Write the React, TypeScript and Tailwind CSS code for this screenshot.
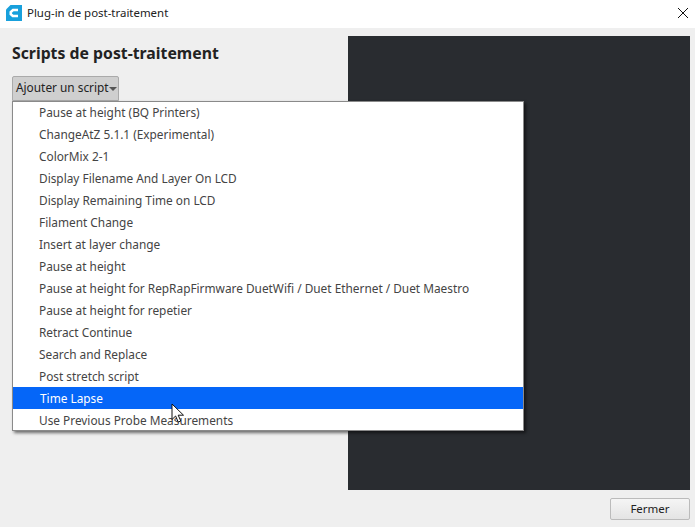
const items = [
  "Pause at height (BQ Printers)",
  "ChangeAtZ 5.1.1 (Experimental)",
  "ColorMix 2-1",
  "Display Filename And Layer On LCD",
  "Display Remaining Time on LCD",
  "Filament Change",
  "Insert at layer change",
  "Pause at height",
  "Pause at height for RepRapFirmware DuetWifi / Duet Ethernet / Duet Maestro",
  "Pause at height for repetier",
  "Retract Continue",
  "Search and Replace",
  "Post stretch script",
  "Time Lapse",
  "Use Previous Probe Measurements",
];

function Logo() {
  return (
    <svg width="16" height="16" viewBox="0 0 16 16" className="ml-[6px] shrink-0">
      <path d="M4.5 0H16V16H0V4.5Z" fill="#18a0dc" />
      <path d="M12 5H7L4.8 7V9.2L6.8 11H12" fill="none" stroke="#fff" strokeWidth="2.6" />
    </svg>
  );
}

export default function App() {
  return (
    <div className="relative flex h-[527px] w-[695px] flex-col overflow-hidden bg-[#efefef] font-['Noto_Sans',sans-serif] text-[#333]">
      <header className="flex h-[28px] shrink-0 items-center bg-white pb-[3px]">
        <Logo />
        <span className="ml-[5px] text-[11.45px] leading-none text-[#222]">Plug-in de post-traitement</span>
        <svg width="12" height="12" viewBox="0 0 12 12" className="ml-auto mr-[6px]">
          <path d="M1 1L11 11M11 1L1 11" stroke="#111" strokeWidth="1" />
        </svg>
      </header>
      <main className="flex min-h-0 flex-1 gap-[12px] pl-[12px] pr-[5px] pt-[8px]">
        <section className="w-[324px] shrink-0">
          <h1 className="mt-[7px] text-[15.8px] font-bold leading-[20px] text-[#222]">Scripts de post-traitement</h1>
          <button className="mt-[13px] flex h-[25px] w-[107px] items-center whitespace-nowrap rounded-t-[2px] border border-[#aaa] bg-[#cfcfcf] pb-px pl-[3px] text-[11.85px] leading-none text-[#222]">
            Ajouter un script
            <span className="mt-[2px] h-0 w-0 border-x-[4px] border-t-[4px] border-x-transparent border-t-[#555]" />
          </button>
        </section>
        <section className="flex-1 bg-[#292c30]" />
      </main>
      <footer className="flex h-[37px] shrink-0 items-start justify-end pr-[5px] pt-[8px]">
        <button className="h-[22px] w-[80px] rounded-[2px] border border-[#bbb] bg-gradient-to-b from-[#f5f5f5] to-[#e4e4e4] text-[11.5px] leading-none text-[#222]">
          Fermer
        </button>
      </footer>
      <ul className="absolute left-[12px] top-[101px] h-[330px] w-[512px] overflow-hidden border border-[#8a8a8a] bg-white shadow-[2px_2px_3px_rgba(0,0,0,0.55)]">
        {items.map((item) => (
          <li
            key={item}
            className={
              item === "Time Lapse"
                ? "-mt-px mb-px flex h-[22px] items-center bg-[#0566f8] pl-[27px] pt-px text-[11.85px] leading-none text-white"
                : "flex h-[22px] items-center pl-[26px] text-[11.85px] leading-none text-[#444]"
            }
          >
            {item}
          </li>
        ))}
      </ul>
      <svg width="14" height="20" viewBox="0 0 14 20" className="absolute left-[171px] top-[403px]">
        <path d="M1 1V16.5L4.6 13L7.2 19L9.8 18L7.2 12.2H12.5Z" fill="#fff" stroke="#111" strokeWidth="1" />
      </svg>
    </div>
  );
}
